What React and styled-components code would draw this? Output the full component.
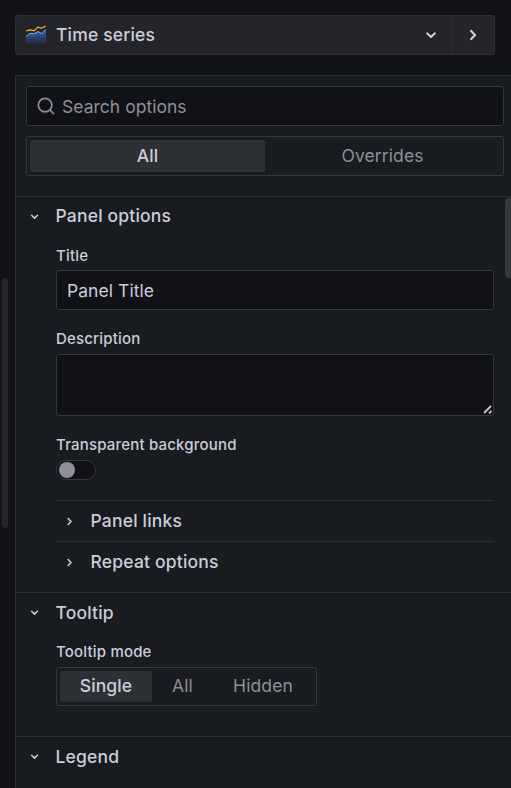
import React from 'react';
import styled, { createGlobalStyle, css } from 'styled-components';

const color = {
  canvas: '#111217',
  panel: '#181b1f',
  raised: '#24252a',
  selected: '#2d3034',
  line: '#2e3035',
  field: '#36383d',
  text: '#ccccdc',
  muted: '#8e8f9a',
};

const GlobalStyle = createGlobalStyle`
  *, *::before, *::after { box-sizing: border-box; }
  body {
    margin: 0;
    overflow: hidden;
    background: ${color.canvas};
    color: ${color.text};
    font-family: Inter, "Liberation Sans", sans-serif;
    font-size: 17.5px;
    line-height: 24px;
    letter-spacing: 0.1875px;
  }
  button, input, textarea { font: inherit; letter-spacing: inherit; color: inherit; }
`;

const Page = styled.div`
  display: flex;
  width: 511px;
  height: 788px;
  overflow: hidden;
  background: ${color.canvas};
`;

const ResizeRail = styled.div`
  flex: 0 0 15px;
  padding: 278px 0 0 2px;
`;

const ResizeHandle = styled.div`
  width: 6px;
  height: 250px;
  border-radius: 3px;
  background: #25262b;
`;

const Column = styled.div`
  flex: 1;
  min-width: 0;
  display: flex;
  flex-direction: column;
  gap: 20px;
  padding-top: 15px;
`;

const Picker = styled.div`
  display: flex;
  flex: 0 0 40px;
  width: 480px;
  border: 1px solid ${color.line};
  border-radius: 2.5px;
  background: ${color.raised};
`;

const PickerMain = styled.button`
  flex: 1;
  display: flex;
  align-items: center;
  gap: 10px;
  padding: 0 10px;
  border: 0;
  background: none;
  font-weight: 500;
  text-align: left;
`;

const PickerName = styled.span`
  flex: 1;
  padding-bottom: 1px;
`;

const PickerToggle = styled.button`
  display: flex;
  align-items: center;
  justify-content: center;
  width: 43px;
  padding: 0;
  border: 0;
  border-left: 1px solid ${color.line};
  background: none;
`;

const OptionsPane = styled.div`
  flex: 1;
  border: 1px solid ${color.line};
  border-width: 1px 0 0 1px;
  border-radius: 2.5px 0 0 0;
  background: ${color.panel};
`;

const Filters = styled.div`
  display: grid;
  gap: 10px;
  width: 498px;
  height: 120px;
  align-content: start;
  padding: 10px;
`;

const frame = css`
  border: 1px solid ${color.field};
  border-radius: 2.5px;
`;

const SearchBox = styled.label`
  ${frame}
  display: flex;
  align-items: center;
  gap: 6px;
  height: 40px;
  padding-left: 9px;
  background: ${color.canvas};
`;

const SearchInput = styled.input`
  flex: 1;
  min-width: 0;
  height: 38px;
  padding: 0;
  border: 0;
  background: none;
  outline: none;
  letter-spacing: 0.02px;
  &::placeholder { color: ${color.muted}; opacity: 1; }
`;

const Segments = styled.div`
  ${frame}
  display: flex;
  width: ${(p) => p.$width};
  height: ${(p) => p.$height};
  padding: 3px;
`;

const Segment = styled.button`
  flex: ${(p) => (p.$width ? `0 0 ${p.$width}` : '1 1 0')};
  padding: 0 0 1px;
  border: 0;
  border-radius: 2.5px;
  background: ${(p) => (p.$active ? color.selected : 'transparent')};
  color: ${(p) => (p.$active ? color.text : color.muted)};
  font-weight: ${(p) => (p.$active ? 500 : 400)};
  letter-spacing: 0.1px;
`;

const ScrollArea = styled.div`
  position: relative;
`;

const ScrollThumb = styled.div`
  position: absolute;
  top: 2px;
  right: -4px;
  width: 10px;
  height: 80px;
  border-radius: 4px;
  background: #36383d;
`;

const Section = styled.section`
  height: ${(p) => p.$height};
  border-top: 1px solid ${color.line};
`;

const SectionHeader = styled.h2`
  display: flex;
  align-items: center;
  gap: 13.5px;
  height: ${(p) => (p.$nested ? '40px' : p.$height || '39px')};
  margin: 0;
  padding-left: ${(p) => (p.$nested ? '6px' : '11px')};
  font-size: inherit;
  font-weight: 500;
`;

const SectionBody = styled.div`
  width: 438px;
  margin-left: 40px;
  padding-top: ${(p) => p.$top || '9px'};
`;

const Field = styled.div`
  display: flex;
  flex-direction: column;
  gap: ${(p) => p.$gap || '4px'};
  margin-bottom: ${(p) => p.$after || '18px'};
`;

const Label = styled.label`
  height: 22px;
  font-size: 15px;
  line-height: 22px;
  font-weight: 500;
`;

const TextInput = styled.input`
  ${frame}
  width: 100%;
  height: 40px;
  padding: 0 10px;
  background: ${color.canvas};
  outline: none;
  letter-spacing: 0.06px;
`;

const TextAreaWrap = styled.div`
  position: relative;
  height: 62px;
`;

const TextArea = styled.textarea`
  ${frame}
  display: block;
  width: 100%;
  height: 62px;
  resize: none;
  background: ${color.canvas};
  outline: none;
`;

const Grip = styled.svg`
  position: absolute;
  right: 2px;
  bottom: 2px;
`;

const Switch = styled.button`
  ${frame}
  display: flex;
  align-items: center;
  width: 40px;
  height: 20px;
  padding: 0 2px;
  border-radius: 10px;
  background: ${color.canvas};
`;

const Knob = styled.span`
  width: 16px;
  height: 16px;
  border-radius: 50%;
  background: #8f8e9b;
`;

const NestedRow = styled.div`
  height: 41px;
  border-top: 1px solid ${color.line};
`;

function Chevron({ size = 15, open, weight = 2 }) {
  return (
    <svg width={size} height={size} viewBox="0 0 24 24" fill="none" stroke={color.text}
      strokeWidth={weight} strokeLinecap="round" strokeLinejoin="round">
      <path d={open ? 'M7.3 10l4.7 4.5 4.7-4.5' : 'M9.8 7.2l4.7 4.8-4.7 4.8'} />
    </svg>
  );
}

function TimeSeriesIcon() {
  return (
    <svg width="20" height="20" viewBox="0 0 20 20" fill="none">
      <defs>
        <linearGradient id="area" x1="0" y1="5" x2="0" y2="19" gradientUnits="userSpaceOnUse">
          <stop offset="0" stopColor="#3865ab" />
          <stop offset="0.5" stopColor="#2a4678" />
          <stop offset="1" stopColor="#22293a" />
        </linearGradient>
        <linearGradient id="line" x1="0" y1="0" x2="20" y2="0" gradientUnits="userSpaceOnUse">
          <stop offset="0" stopColor="#f2cc0c" />
          <stop offset="1" stopColor="#ff9830" />
        </linearGradient>
      </defs>
      <path d="M0 11.5L4 8.4l4 .4 4-2.2 3.8 2L20 4.5V18.5H0z" fill="url(#area)" />
      <path d="M.2 11.3L4 8.4l4 .4 4-2.2 3.8 2L19.8 4.5" stroke="#84aff1" strokeWidth="1" />
      <path d="M.2 6L4 4.9l4 1 3.8-3.8 4 .9L19.8 1" stroke="url(#line)" strokeWidth="1.2" />
    </svg>
  );
}

function SearchIcon() {
  return (
    <svg width="20" height="20" viewBox="0 0 20 20" fill="none" stroke="#8e8f9a"
      strokeWidth="1.7" strokeLinecap="round">
      <circle cx="9.1" cy="9.1" r="6.8" />
      <path d="M14 14l3.6 3.6" />
    </svg>
  );
}

function NestedGroup({ title }) {
  return (
    <NestedRow>
      <SectionHeader $nested>
        <Chevron size={15} weight={2.5} />
        <span>{title}</span>
      </SectionHeader>
    </NestedRow>
  );
}

function Group({ title, height, headerHeight, bodyTop, children }) {
  return (
    <Section $height={height}>
      <SectionHeader $height={headerHeight}>
        <Chevron size={15} weight={2.5} open />
        <span>{title}</span>
      </SectionHeader>
      {children && <SectionBody $top={bodyTop}>{children}</SectionBody>}
    </Section>
  );
}

export default function App() {
  return (
    <Page>
      <GlobalStyle />
      <ResizeRail><ResizeHandle /></ResizeRail>
      <Column>
        <Picker>
          <PickerMain>
            <TimeSeriesIcon />
            <PickerName>Time series</PickerName>
            <Chevron size={20} open weight={2.4} />
          </PickerMain>
          <PickerToggle><Chevron size={20} weight={2.6} /></PickerToggle>
        </Picker>
        <OptionsPane>
          <Filters>
            <SearchBox>
              <SearchIcon />
              <SearchInput placeholder="Search options" />
            </SearchBox>
            <Segments $height="40px">
              <Segment $active>All</Segment>
              <Segment>Overrides</Segment>
            </Segments>
          </Filters>
          <ScrollArea>
            <Group title="Panel options" height="396px" headerHeight="38px" bodyTop="10px">
              <Field $gap="3px">
                <Label>Title</Label>
                <TextInput defaultValue="Panel Title" />
              </Field>
              <Field>
                <Label>Description</Label>
                <TextAreaWrap>
                  <TextArea />
                  <Grip width="9" height="9" viewBox="0 0 9 9" stroke="#c4c4c8" strokeWidth="1.8">
                    <path d="M1 8L8 1M6 8.4L8.4 6" />
                  </Grip>
                </TextAreaWrap>
              </Field>
              <Field $after="20px">
                <Label>Transparent background</Label>
                <Switch role="switch"><Knob /></Switch>
              </Field>
              <NestedGroup title="Panel links" />
              <NestedGroup title="Repeat options" />
            </Group>
            <Group title="Tooltip" height="144px">
              <Field>
                <Label>Tooltip mode</Label>
                <Segments $width="261px" $height="39px">
                  <Segment $active $width="92px">Single</Segment>
                  <Segment $width="61px">All</Segment>
                  <Segment>Hidden</Segment>
                </Segments>
              </Field>
            </Group>
            <Group title="Legend" height="60px" />
            <ScrollThumb />
          </ScrollArea>
        </OptionsPane>
      </Column>
    </Page>
  );
}
